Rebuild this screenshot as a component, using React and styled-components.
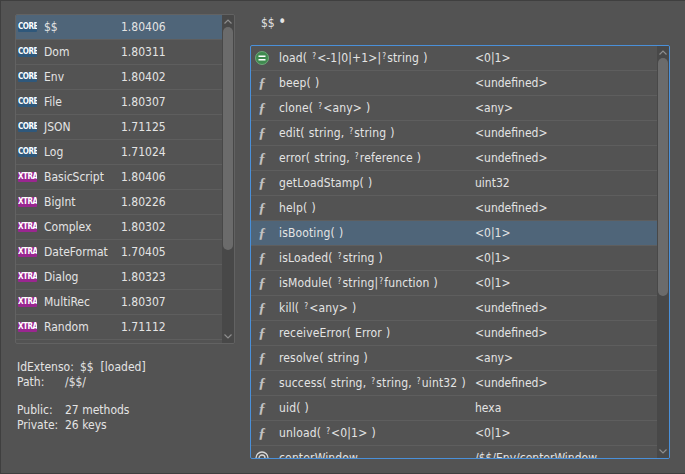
import styled, { createGlobalStyle } from "styled-components"

const GlobalStyle = createGlobalStyle`
    html, body {
        margin: 0;
        padding: 0;
        background: #535353;
    }
`

const modules = [
    ["CORE", "$$", "1.80406"],
    ["CORE", "Dom", "1.80311"],
    ["CORE", "Env", "1.80402"],
    ["CORE", "File", "1.80307"],
    ["CORE", "JSON", "1.71125"],
    ["CORE", "Log", "1.71024"],
    ["XTRA", "BasicScript", "1.80406"],
    ["XTRA", "BigInt", "1.80226"],
    ["XTRA", "Complex", "1.80302"],
    ["XTRA", "DateFormat", "1.70405"],
    ["XTRA", "Dialog", "1.80323"],
    ["XTRA", "MultiRec", "1.80307"],
    ["XTRA", "Random", "1.71112"],
]

// "^" marks an optional argument (the small raised question mark)
const methods = [
    ["load", "( ^<-1|0|+1>|^string )", "<0|1>", "main"],
    ["beep", "( )", "<undefined>"],
    ["clone", "( ^<any> )", "<any>"],
    ["edit", "( string, ^string )", "<undefined>"],
    ["error", "( string, ^reference )", "<undefined>"],
    ["getLoadStamp", "( )", "uint32"],
    ["help", "( )", "<undefined>"],
    ["isBooting", "( )", "<0|1>"],
    ["isLoaded", "( ^string )", "<0|1>"],
    ["isModule", "( ^string|^function )", "<0|1>"],
    ["kill", "( ^<any> )", "<undefined>"],
    ["receiveError", "( Error )", "<undefined>"],
    ["resolve", "( string )", "<any>"],
    ["success", "( string, ^string, ^uint32 )", "<undefined>"],
    ["uid", "( )", "hexa"],
    ["unload", "( ^<0|1> )", "<0|1>"],
    ["centerWindow", "", "/$$/Env/centerWindow", "link"],
]

const Page = styled.div`
    box-sizing: border-box;
    width: 685px;
    height: 474px;
    overflow: hidden;
    display: flex;
    gap: 15px;
    padding: 13px 15px 0 14px;
    background: #535353;
    border-top: 1px solid #3f3f3f;
    border-left: 1px solid #3f3f3f;
    border-bottom: 1px solid #3f3f3f;
    color: #e4e4e4;
    font-family: "DejaVu Sans Condensed", "DejaVu Sans", sans-serif;
    font-size: 12px;
`

const LeftColumn = styled.div`
    width: 220px;
    flex: none;
`

const RightColumn = styled.div`
    flex: 1;
    min-width: 0;
`

const ListBox = styled.div`
    box-sizing: border-box;
    display: flex;
    overflow: hidden;
    height: ${(p) => p.$height}px;
    border: 1px solid ${(p) => p.$color};
    border-radius: 2px;
`

const Rows = styled.div`
    flex: 1;
    min-width: 0;
    overflow: hidden;
`

const ModuleRow = styled.div`
    display: flex;
    align-items: center;
    box-sizing: border-box;
    height: 25px;
    padding-left: 2px;
    border-bottom: 1px solid #5e5e5e;
    background: ${(p) => (p.$selected ? "#4f6579" : "transparent")};
`

const Badge = styled.span`
    flex: none;
    width: 19px;
    height: 10px;
    line-height: 10px;
    margin-right: 7px;
    text-align: center;
    overflow: hidden;
    border-radius: 1px;
    background: ${(p) => (p.$kind === "CORE" ? "#2f587b" : "#9a2690")};
    color: #fff;
    font-weight: 700;
    font-size: 8px;
    letter-spacing: -0.5px;
`

const ModuleName = styled.span`
    width: 77px;
    flex: none;
    white-space: nowrap;
`

const Track = styled.div`
    flex: none;
    width: 12px;
    position: relative;
    background: #484848;
`

const Thumb = styled.div`
    position: absolute;
    left: 1px;
    right: 1px;
    top: ${(p) => p.$top}px;
    height: ${(p) => p.$size}px;
    background: #6b6b6b;
    border-radius: 5px;
`

const Chevron = styled.svg`
    position: absolute;
    left: 2px;
    width: 8px;
    height: 5px;
    ${(p) => (p.$down ? "bottom: 4px;" : "top: 4px;")}
`

const Info = styled.div`
    margin-top: 16px;
    padding-left: 2px;
    line-height: 14.6px;
`

const InfoLine = styled.div`
    display: flex;
    margin-bottom: ${(p) => (p.$gap ? "14px" : "0")};
`

const InfoLabel = styled.span`
    width: ${(p) => p.$width}px;
    flex: none;
`

const Title = styled.div`
    height: 31px;
    line-height: 19px;
    padding-left: 11px;
    box-sizing: border-box;
`

const Dot = styled.span`
    font-size: 15px;
    line-height: 14px;
`

const MethodRow = styled.div`
    display: flex;
    align-items: center;
    box-sizing: border-box;
    height: 25px;
    flex: none;
    border-bottom: 1px solid #5e5e5e;
    background: ${(p) => (p.$selected ? "#4f6579" : "transparent")};
    white-space: nowrap;
`

const IconCell = styled.span`
    width: 22px;
    margin-right: 6px;
    flex: none;
    display: flex;
    justify-content: center;
`

const FnGlyph = styled.span`
    font-family: "Liberation Serif", serif;
    font-style: italic;
    font-weight: 700;
    font-size: 15px;
    line-height: 15px;
    color: #c2c2c2;
`

const Signature = styled.span`
    width: 196px;
    flex: none;
    letter-spacing: 0.15px;
    word-spacing: 0.5px;
`

const Optional = styled.span`
    font-size: 8px;
    position: relative;
    top: -3px;
    margin: 0 1px;
`

const MainIcon = () => (
    <svg width="14" height="14" viewBox="0 0 14 14">
        <circle cx="7" cy="7" r="6.5" fill="#3f8a4f" stroke="#6fa67a" strokeWidth="1" />
        <path d="M3.5 5.2h7M3.5 8.8h7" stroke="#fff" strokeWidth="1.6" />
    </svg>
)

const LinkIcon = () => (
    <svg width="14" height="14" viewBox="0 0 14 14">
        <circle cx="7" cy="7" r="6" fill="none" stroke="#d8d8d8" strokeWidth="1.3" />
        <circle cx="7" cy="7" r="3" fill="none" stroke="#d8d8d8" strokeWidth="1.3" />
    </svg>
)

const renderSignature = (text) =>
    text.split("^").map((part, i) => (
        <span key={i}>
            {i > 0 && <Optional>?</Optional>}
            {part}
        </span>
    ))

const Scrollbar = ({ top, size, color }) => (
    <Track>
        <Chevron viewBox="0 0 8 5">
            <path d="M0.5 4.5L4 1l3.5 3.5" fill="none" stroke={color} strokeWidth="1.2" />
        </Chevron>
        <Thumb $top={top} $size={size} />
        <Chevron $down viewBox="0 0 8 5">
            <path d="M0.5 0.5L4 4l3.5-3.5" fill="none" stroke={color} strokeWidth="1.2" />
        </Chevron>
    </Track>
)

const App = () => {
    return (
        <Page>
            <GlobalStyle />
            <LeftColumn>
                <ListBox $height={330} $color="#626262">
                    <Rows>
                        {modules.map(([kind, name, version], i) => (
                            <ModuleRow key={name} $selected={i === 0}>
                                <Badge $kind={kind}>{kind}</Badge>
                                <ModuleName>{name}</ModuleName>
                                <span>{version}</span>
                            </ModuleRow>
                        ))}
                    </Rows>
                    <Scrollbar top={12} size={223} color="#8d8d8d" />
                </ListBox>
                <Info>
                    <InfoLine>
                        <InfoLabel $width={63}>IdExtenso:</InfoLabel>
                        <span>$$&nbsp;&nbsp;[loaded]</span>
                    </InfoLine>
                    <InfoLine $gap>
                        <InfoLabel $width={48}>Path:</InfoLabel>
                        <span>/$$/</span>
                    </InfoLine>
                    <InfoLine>
                        <InfoLabel $width={48}>Public:</InfoLabel>
                        <span>27 methods</span>
                    </InfoLine>
                    <InfoLine>
                        <InfoLabel $width={48}>Private:</InfoLabel>
                        <span>26 keys</span>
                    </InfoLine>
                </Info>
            </LeftColumn>
            <RightColumn>
                <Title>
                    $$ <Dot>•</Dot>
                </Title>
                <ListBox $height={414} $color="#4a90d9">
                    <Rows>
                        {methods.map(([name, args, ret, kind]) => (
                            <MethodRow key={name} $selected={name === "isBooting"}>
                                <IconCell>
                                    {kind === "main" ? (
                                        <MainIcon />
                                    ) : kind === "link" ? (
                                        <LinkIcon />
                                    ) : (
                                        <FnGlyph>ƒ</FnGlyph>
                                    )}
                                </IconCell>
                                <Signature>
                                    {name}
                                    {renderSignature(args)}
                                </Signature>
                                <span>{ret}</span>
                            </MethodRow>
                        ))}
                    </Rows>
                    <Scrollbar top={12} size={238} color="#8d8d8d" />
                </ListBox>
            </RightColumn>
        </Page>
    )
}

export default App
